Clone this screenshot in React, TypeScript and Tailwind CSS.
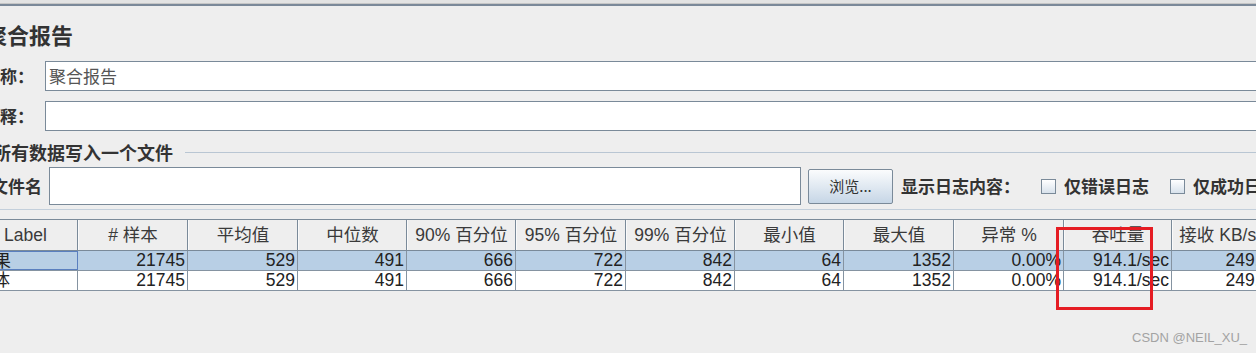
import React from "react";

const cjk = "font-['Noto_Sans_CJK_SC',sans-serif]";
const mix = "font-['Liberation_Sans','Noto_Sans_CJK_SC',sans-serif]";

const headers = [
  "Label",
  "# 样本",
  "平均值",
  "中位数",
  "90% 百分位",
  "95% 百分位",
  "99% 百分位",
  "最小值",
  "最大值",
  "异常 %",
  "吞吐量",
  "接收 KB/sec",
];
const widths = [105, 110, 110, 109, 109, 110, 109, 109, 110, 110, 108, 110];
const rows = [
  ["结果", "21745", "529", "491", "666", "722", "842", "64", "1352", "0.00%", "914.1/sec", "249.53"],
  ["总体", "21745", "529", "491", "666", "722", "842", "64", "1352", "0.00%", "914.1/sec", "249.53"],
];

function Checkbox() {
  return (
    <div className="w-[15px] h-[15px] shrink-0 border border-[#7a8a99] bg-gradient-to-b from-[#ffffff] to-[#d8e2ec]" />
  );
}

export default function App() {
  return (
    <div className="relative w-[1256px] h-[353px] overflow-hidden bg-[#eeeeee] text-[#333333]">
      <div className="h-[3px] bg-[#e3e3e3]" />
      <div className="h-[1px] bg-[#c6c6c6]" />
      <div className="h-[2px] bg-[#7b8999]" />

      <div className={`mt-[13px] ml-[-15px] h-[30px] leading-[30px] text-[22px] font-bold whitespace-nowrap ${cjk}`}>
        聚合报告
      </div>

      <div className="mt-[12px] flex items-center h-[30px]">
        <div className={`ml-[-17px] w-[62px] shrink-0 text-[17px] font-bold leading-[30px] whitespace-nowrap ${cjk}`}>
          名称：
        </div>
        <div className={`w-[1230px] shrink-0 h-[30px] border border-[#7a8a99] bg-white pl-[3px] text-[17px] leading-[28px] text-[#555555] ${cjk}`}>
          聚合报告
        </div>
      </div>

      <div className="mt-[10px] flex items-center h-[30px]">
        <div className={`ml-[-17px] w-[62px] shrink-0 text-[17px] font-bold leading-[30px] whitespace-nowrap ${cjk}`}>
          注释：
        </div>
        <div className="w-[1230px] shrink-0 h-[30px] border border-[#7a8a99] bg-white" />
      </div>

      <div className="mt-[9px] flex items-center h-[24px]">
        <div className={`ml-[-7px] shrink-0 text-[18px] font-bold leading-[24px] whitespace-nowrap ${cjk}`}>
          所有数据写入一个文件
        </div>
        <div className="ml-[12px] flex-1 h-px bg-[#b9c6d3]" />
      </div>

      <div className="mt-[3px] flex items-center h-[38px]">
        <div className={`ml-[-9px] w-[58px] shrink-0 text-[17px] font-bold leading-[38px] whitespace-nowrap ${cjk}`}>
          文件名
        </div>
        <div className="w-[752px] shrink-0 h-[38px] border border-[#7a8a99] bg-white" />
        <div
          className={`ml-[7px] w-[85px] h-[35px] shrink-0 flex items-center justify-center rounded-[2px] border border-[#7a8a99] bg-gradient-to-b from-[#fbfcfd] to-[#c6d6e6] text-[15px] ${cjk}`}
        >
          浏览...
        </div>
        <div className={`ml-[8px] shrink-0 text-[17px] font-bold whitespace-nowrap ${cjk}`}>显示日志内容：</div>
        <div className="ml-[21px]">
          <Checkbox />
        </div>
        <div className={`ml-[8px] shrink-0 text-[17px] font-bold whitespace-nowrap ${cjk}`}>仅错误日志</div>
        <div className="ml-[21px]">
          <Checkbox />
        </div>
        <div className={`ml-[8px] shrink-0 text-[17px] font-bold whitespace-nowrap ${cjk}`}>仅成功日志</div>
      </div>

      <div className="mt-[4px] h-px bg-[#c3cfdb]" />

      <div className="mt-[9px] ml-[-27px] w-max">
        <div className="flex h-[32px] border-t border-b border-[#7a8a99] bg-[#eeeeee]">
          {headers.map((h, i) => (
            <div
              key={i}
              style={{ width: widths[i] }}
              className={`shrink-0 h-full border-r border-[#7a8a99] border-l border-l-[#fafafa] flex items-center justify-center text-[17.5px] whitespace-nowrap text-[#3a3a3a] ${mix}`}
            >
              {h}
            </div>
          ))}
        </div>
        {rows.map((r, ri) => (
          <div
            key={ri}
            className={`flex h-[20px] border-b border-[#8593a1] ${ri === 0 ? "bg-[#b8cfe5]" : "bg-white"}`}
          >
            {r.map((c, ci) => (
              <div
                key={ci}
                style={{ width: widths[ci] }}
                className={`shrink-0 h-full border-r whitespace-nowrap text-[17.5px] leading-[19px] text-[#222222] ${mix} ${
                  ci === 0 ? "text-left pl-[2px]" : "text-right pr-[2px]"
                } ${ri === 0 && ci === 0 ? "border border-[#5a7fbf]" : "border-[#8593a1]"}`}
              >
                {c}
              </div>
            ))}
          </div>
        ))}
      </div>

      <div className="absolute left-[1056px] top-[227px] w-[97px] h-[83px] border-[3px] border-[#e51c23]" />

      <div className="absolute left-[1132px] top-[330px] text-[13px] leading-[15px] text-[#a3a3a3] font-['Liberation_Sans',sans-serif] whitespace-nowrap">
        CSDN @NEIL_XU_
      </div>
    </div>
  );
}
